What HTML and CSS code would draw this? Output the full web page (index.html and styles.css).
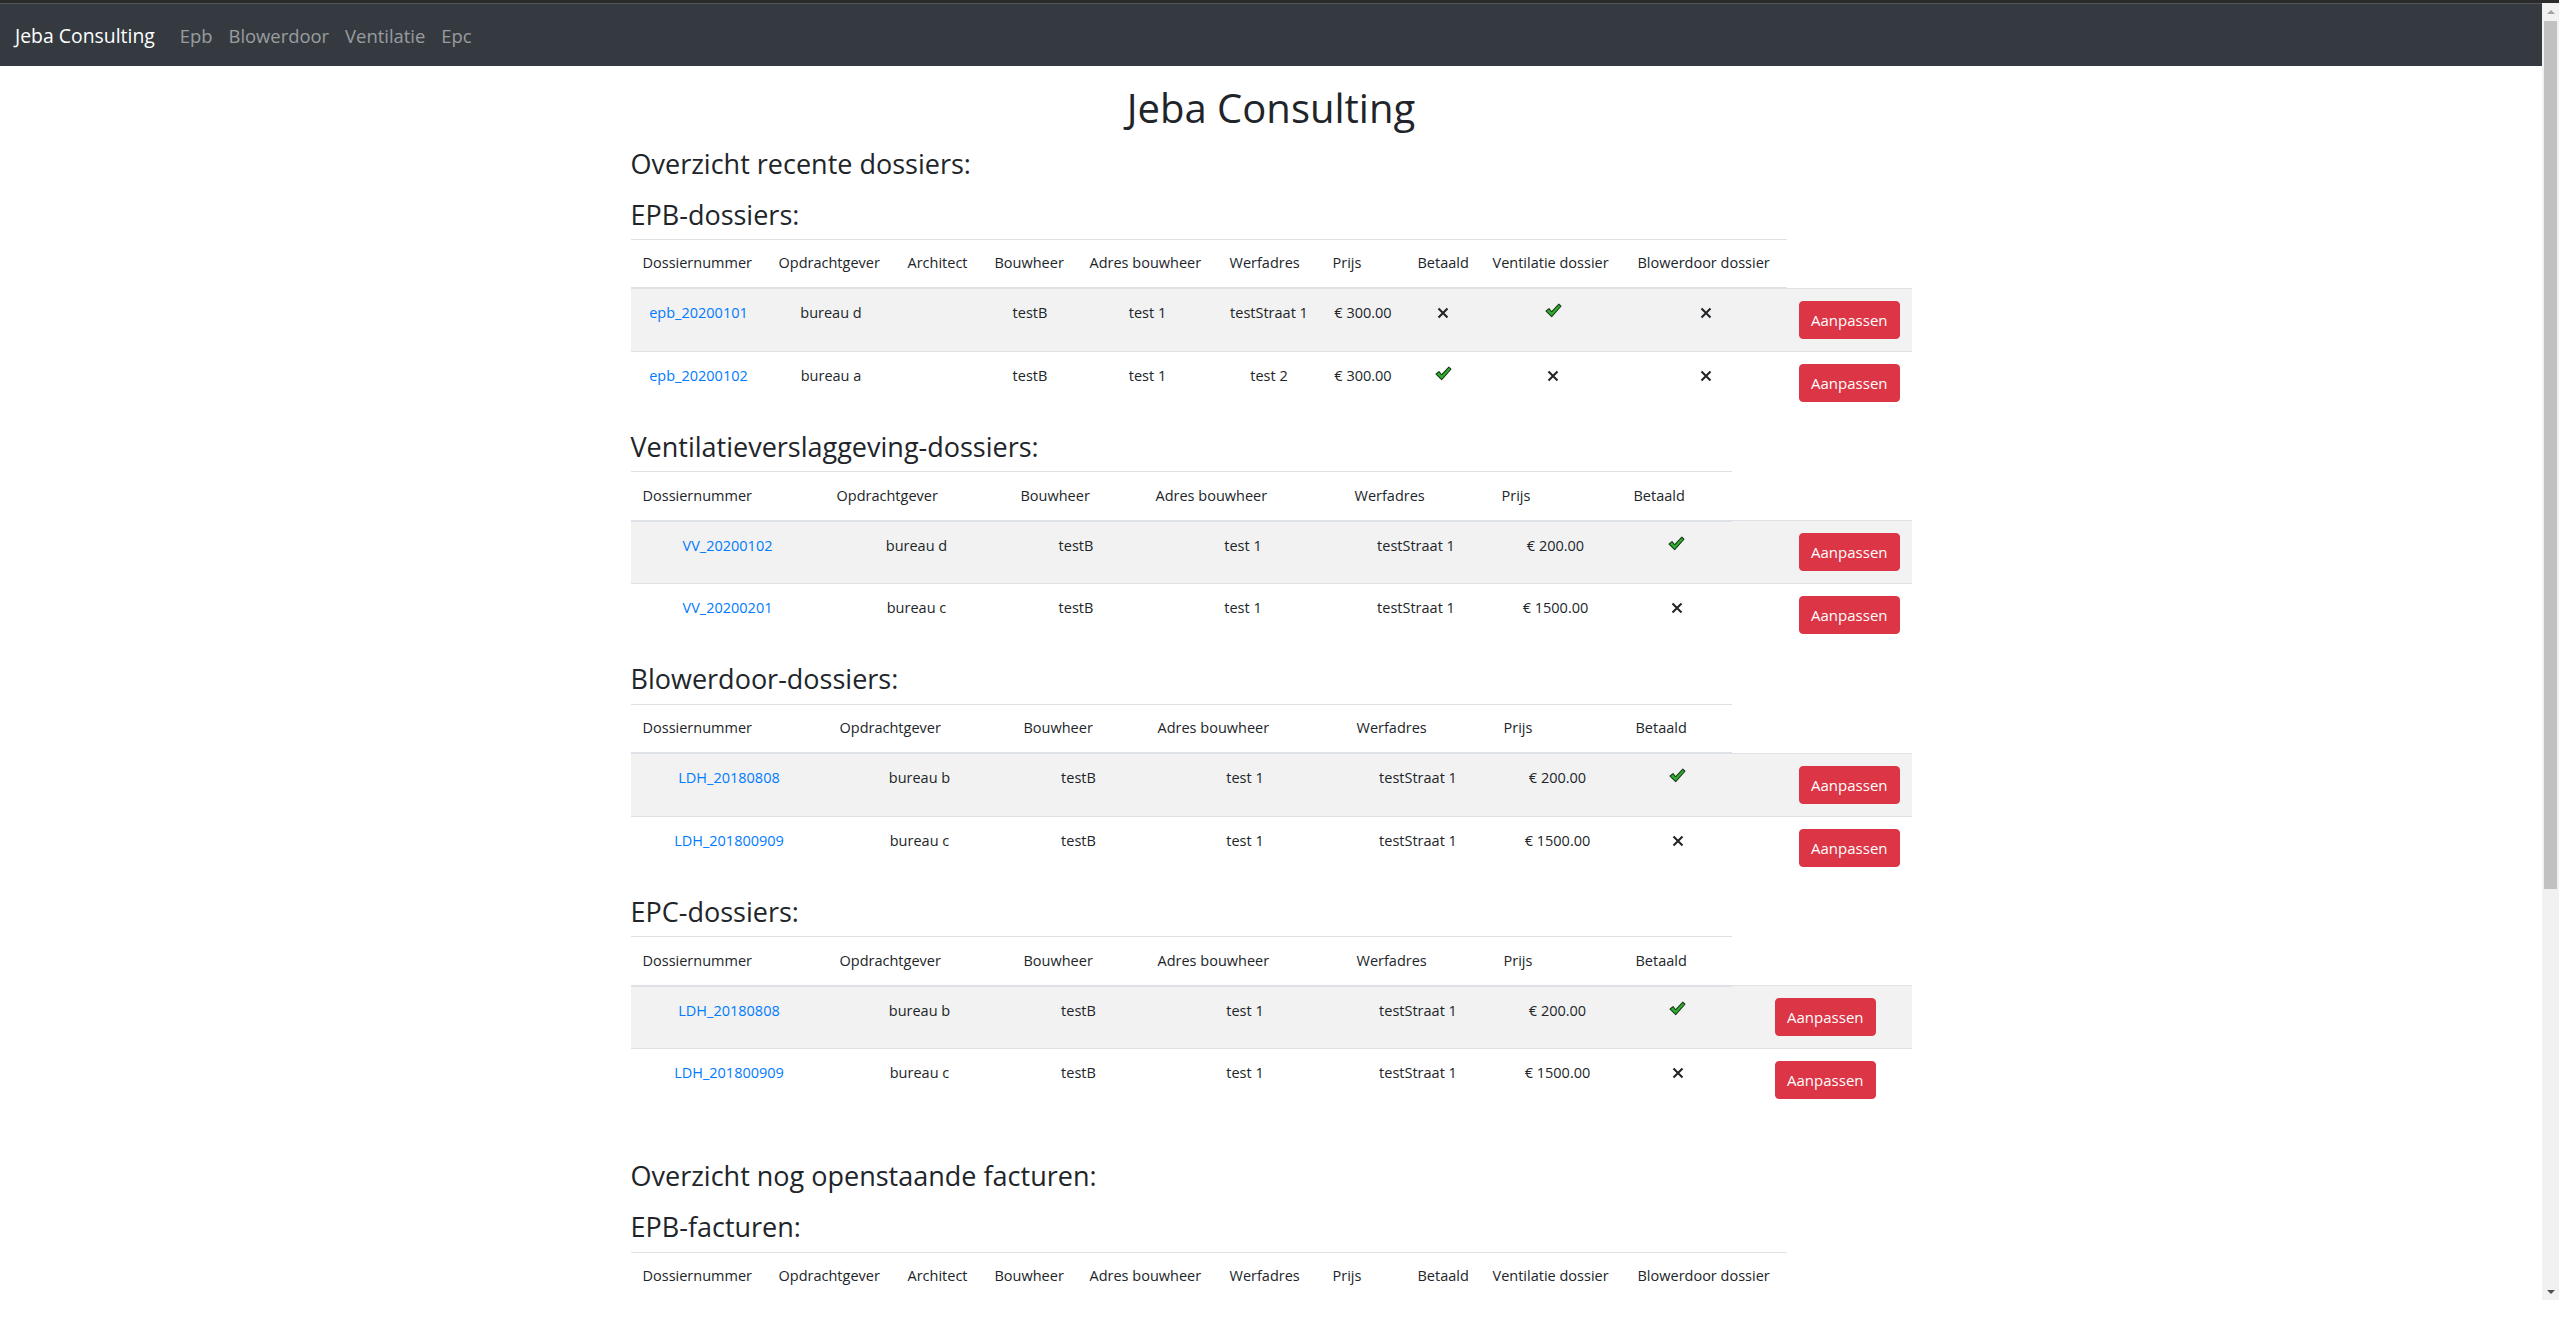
FILE: index.html
```html
<!DOCTYPE html>
<html lang="nl">
<head>
<meta charset="utf-8">
<title>Jeba Consulting</title>
<link rel="stylesheet" href="styles.css">
</head>
<body>
<div class="frame-top"></div>
<div class="viewport">
<div class="page">
<nav class="navbar">
  <a class="brand" href="#">Jeba Consulting</a>
  <a class="nav-link" href="#">Epb</a>
  <a class="nav-link" href="#">Blowerdoor</a>
  <a class="nav-link" href="#">Ventilatie</a>
  <a class="nav-link" href="#">Epc</a>
</nav>

<main class="container">
  <h1 class="page-title">Jeba Consulting</h1>

  <h3 class="overview">Overzicht recente dossiers:</h3>

  <h3 class="section">EPB-dossiers:</h3>
  <table class="tbl t-epb">
    <colgroup><col><col><col><col><col><col><col><col><col><col><col></colgroup>
    <thead><tr><th>Dossiernummer</th><th>Opdrachtgever</th><th>Architect</th><th>Bouwheer</th><th>Adres bouwheer</th><th>Werfadres</th><th>Prijs</th><th>Betaald</th><th>Ventilatie dossier</th><th>Blowerdoor dossier</th></tr></thead>
    <tbody>
      <tr><td><a href="#">epb_20200101</a></td><td>bureau d</td><td></td><td>testB</td><td>test 1</td><td>testStraat 1</td><td>€ 300.00</td>
        <td><svg class="ic-x" viewBox="0 0 12 12"><path d="M1.5 1.5L10.5 10.5M10.5 1.5L1.5 10.5"/></svg></td>
        <td><svg class="ic-ok" viewBox="0 0 16 14"><path d="M1 7.5L3.8 5.2L6.2 8.2L13 1L15 3L6.3 12.8Z"/></svg></td>
        <td><svg class="ic-x" viewBox="0 0 12 12"><path d="M1.5 1.5L10.5 10.5M10.5 1.5L1.5 10.5"/></svg></td>
        <td class="act"><button class="btn">Aanpassen</button></td></tr>
      <tr><td><a href="#">epb_20200102</a></td><td>bureau a</td><td></td><td>testB</td><td>test 1</td><td>test 2</td><td>€ 300.00</td>
        <td><svg class="ic-ok" viewBox="0 0 16 14"><path d="M1 7.5L3.8 5.2L6.2 8.2L13 1L15 3L6.3 12.8Z"/></svg></td>
        <td><svg class="ic-x" viewBox="0 0 12 12"><path d="M1.5 1.5L10.5 10.5M10.5 1.5L1.5 10.5"/></svg></td>
        <td><svg class="ic-x" viewBox="0 0 12 12"><path d="M1.5 1.5L10.5 10.5M10.5 1.5L1.5 10.5"/></svg></td>
        <td class="act"><button class="btn">Aanpassen</button></td></tr>
    </tbody>
  </table>

  <h3 class="section">Ventilatieverslaggeving-dossiers:</h3>
  <table class="tbl t-vv">
    <colgroup><col><col><col><col><col><col><col><col></colgroup>
    <thead><tr><th>Dossiernummer</th><th>Opdrachtgever</th><th>Bouwheer</th><th>Adres bouwheer</th><th>Werfadres</th><th>Prijs</th><th>Betaald</th></tr></thead>
    <tbody>
      <tr><td><a href="#">VV_20200102</a></td><td>bureau d</td><td>testB</td><td>test 1</td><td>testStraat 1</td><td>€ 200.00</td>
        <td><svg class="ic-ok" viewBox="0 0 16 14"><path d="M1 7.5L3.8 5.2L6.2 8.2L13 1L15 3L6.3 12.8Z"/></svg></td>
        <td class="act"><button class="btn">Aanpassen</button></td></tr>
      <tr><td><a href="#">VV_20200201</a></td><td>bureau c</td><td>testB</td><td>test 1</td><td>testStraat 1</td><td>€ 1500.00</td>
        <td><svg class="ic-x" viewBox="0 0 12 12"><path d="M1.5 1.5L10.5 10.5M10.5 1.5L1.5 10.5"/></svg></td>
        <td class="act"><button class="btn">Aanpassen</button></td></tr>
    </tbody>
  </table>

  <h3 class="section">Blowerdoor-dossiers:</h3>
  <table class="tbl t-bd">
    <colgroup><col><col><col><col><col><col><col><col></colgroup>
    <thead><tr><th>Dossiernummer</th><th>Opdrachtgever</th><th>Bouwheer</th><th>Adres bouwheer</th><th>Werfadres</th><th>Prijs</th><th>Betaald</th></tr></thead>
    <tbody>
      <tr><td><a href="#">LDH_20180808</a></td><td>bureau b</td><td>testB</td><td>test 1</td><td>testStraat 1</td><td>€ 200.00</td>
        <td><svg class="ic-ok" viewBox="0 0 16 14"><path d="M1 7.5L3.8 5.2L6.2 8.2L13 1L15 3L6.3 12.8Z"/></svg></td>
        <td class="act"><button class="btn">Aanpassen</button></td></tr>
      <tr><td><a href="#">LDH_201800909</a></td><td>bureau c</td><td>testB</td><td>test 1</td><td>testStraat 1</td><td>€ 1500.00</td>
        <td><svg class="ic-x" viewBox="0 0 12 12"><path d="M1.5 1.5L10.5 10.5M10.5 1.5L1.5 10.5"/></svg></td>
        <td class="act"><button class="btn">Aanpassen</button></td></tr>
    </tbody>
  </table>

  <h3 class="section">EPC-dossiers:</h3>
  <table class="tbl t-epc">
    <colgroup><col><col><col><col><col><col><col><col><col></colgroup>
    <thead><tr><th>Dossiernummer</th><th>Opdrachtgever</th><th>Bouwheer</th><th>Adres bouwheer</th><th>Werfadres</th><th>Prijs</th><th>Betaald</th></tr></thead>
    <tbody>
      <tr><td><a href="#">LDH_20180808</a></td><td>bureau b</td><td>testB</td><td>test 1</td><td>testStraat 1</td><td>€ 200.00</td>
        <td><svg class="ic-ok" viewBox="0 0 16 14"><path d="M1 7.5L3.8 5.2L6.2 8.2L13 1L15 3L6.3 12.8Z"/></svg></td>
        <td class="act"><button class="btn">Aanpassen</button></td><td></td></tr>
      <tr><td><a href="#">LDH_201800909</a></td><td>bureau c</td><td>testB</td><td>test 1</td><td>testStraat 1</td><td>€ 1500.00</td>
        <td><svg class="ic-x" viewBox="0 0 12 12"><path d="M1.5 1.5L10.5 10.5M10.5 1.5L1.5 10.5"/></svg></td>
        <td class="act"><button class="btn">Aanpassen</button></td><td></td></tr>
    </tbody>
  </table>

  <h3 class="overview overview-gap">Overzicht nog openstaande facturen:</h3>

  <h3 class="section">EPB-facturen:</h3>
  <table class="tbl t-epb">
    <colgroup><col><col><col><col><col><col><col><col><col><col><col></colgroup>
    <thead><tr><th>Dossiernummer</th><th>Opdrachtgever</th><th>Architect</th><th>Bouwheer</th><th>Adres bouwheer</th><th>Werfadres</th><th>Prijs</th><th>Betaald</th><th>Ventilatie dossier</th><th>Blowerdoor dossier</th></tr></thead>
    <tbody>
      <tr><td><a href="#">epb_20200101</a></td><td>bureau d</td><td></td><td>testB</td><td>test 1</td><td>testStraat 1</td><td>€ 300.00</td>
        <td><svg class="ic-x" viewBox="0 0 12 12"><path d="M1.5 1.5L10.5 10.5M10.5 1.5L1.5 10.5"/></svg></td>
        <td><svg class="ic-ok" viewBox="0 0 16 14"><path d="M1 7.5L3.8 5.2L6.2 8.2L13 1L15 3L6.3 12.8Z"/></svg></td>
        <td><svg class="ic-x" viewBox="0 0 12 12"><path d="M1.5 1.5L10.5 10.5M10.5 1.5L1.5 10.5"/></svg></td>
        <td class="act"><button class="btn">Aanpassen</button></td></tr>
    </tbody>
  </table>
</main>
</div>
<div class="scrollbar">
  <div class="sb-btn"><span class="tri-up"></span></div>
  <div class="sb-thumb"></div>
  <div class="sb-track"></div>
  <div class="sb-btn"><span class="tri-down"></span></div>
</div>
</div>
<div class="frame-bottom"></div>
</body>
</html>
```

FILE: styles.css
```css
* { box-sizing: border-box; }

html, body {
  margin: 0;
  padding: 0;
}

body {
  height: 1335px;
  overflow: hidden;
  display: flex;
  flex-direction: column;
  font-family: "Open Sans", "Noto Sans", "Liberation Sans", sans-serif;
  font-size: 15px;
  line-height: 1.5;
  color: #212529;
  background: #fff;
}

a { color: #007bff; text-decoration: none; }

/* window frame */
.frame-top {
  height: 3px;
  flex: none;
  background: #2b2b2b;
}

.viewport {
  height: 1297px;
  flex: none;
  display: flex;
}

.page {
  flex: 1;
  min-width: 0;
  overflow: hidden;
}

.frame-bottom {
  flex: 1;
  background: #fff;
}

.scrollbar {
  width: 17px;
  flex: none;
  display: flex;
  flex-direction: column;
  background: #f1f1f1;
}

.sb-btn {
  height: 17px;
  display: flex;
  align-items: center;
  justify-content: center;
}

.tri-up {
  width: 0;
  height: 0;
  border-left: 4px solid transparent;
  border-right: 4px solid transparent;
  border-bottom: 4px solid #a3a3a3;
}

.tri-down {
  width: 0;
  height: 0;
  border-left: 4px solid transparent;
  border-right: 4px solid transparent;
  border-top: 4px solid #505050;
}

.sb-thumb {
  height: 868px;
  margin: 1px 2px 0 2px;
  background: #c1c1c1;
}

.sb-track { flex: 1; }

/* navbar */
.navbar {
  display: flex;
  align-items: center;
  height: 63px;
  padding: 2px 15px 0 15px;
  background: #343a40;
  box-shadow: inset 0 1px 0 #50555a;
}

.brand {
  color: #fff;
  font-size: 19.4px;
  margin-right: 17px;
  white-space: nowrap;
}

.nav-link {
  color: rgba(255, 255, 255, 0.5);
  font-size: 18.4px;
  padding: 0 8px;
}

.container {
  width: 1281px;
  margin: 0 auto;
  padding-bottom: 60px;
}

h1, h3 {
  font-weight: 500;
  margin: 0;
}

.page-title {
  text-align: center;
  font-size: 40px;
  line-height: 48px;
  margin-top: 17.5px;
  margin-bottom: 16px;
}

.overview {
  font-size: 27px;
  line-height: 32.4px;
  margin-bottom: 18.6px;
}

.overview-gap {
  margin-top: 49px;
}

.section {
  font-size: 27px;
  line-height: 32.4px;
  margin-bottom: 8px;
}

.tbl {
  width: 100%;
  table-layout: fixed;
  border-collapse: collapse;
  margin-bottom: 17px;
  font-size: 14.5px;
  line-height: 22.5px;
}

.tbl th {
  text-align: left;
  font-weight: 400;
  padding: 12.5px 12px 12.5px 12px;
  border-top: 1px solid #dee2e6;
  border-bottom: 2px solid #dee2e6;
  white-space: nowrap;
  vertical-align: bottom;
}

.tbl td {
  text-align: center;
  padding: 13px 12px 11px 12px;
  border-top: 1px solid #dee2e6;
  vertical-align: top;
  white-space: nowrap;
}

.tbl tbody tr:nth-child(odd) td { background: #f2f2f2; }

.tbl td.act {
  text-align: right;
  padding: 12px 12px;
}

.btn {
  font-family: inherit;
  font-size: 15px;
  line-height: 24px;
  height: 38px;
  padding: 0 11px;
  color: #fff;
  background: #dc3545;
  border: 1px solid #dc3545;
  border-radius: 4px;
}

.ic-x {
  width: 12px;
  height: 12px;
  vertical-align: -1px;
  fill: none;
  stroke: #212529;
  stroke-width: 2.1;
}

.ic-ok {
  width: 17px;
  height: 15px;
  vertical-align: 0;
  fill: #2fae2f;
  stroke: #163a16;
  stroke-width: 1;
  stroke-linejoin: round;
}

/* EPB columns */
.t-epb col:nth-child(1) { width: 136px; }
.t-epb col:nth-child(2) { width: 129px; }
.t-epb col:nth-child(3) { width: 87px; }
.t-epb col:nth-child(4) { width: 95px; }
.t-epb col:nth-child(5) { width: 140px; }
.t-epb col:nth-child(6) { width: 103px; }
.t-epb col:nth-child(7) { width: 85px; }
.t-epb col:nth-child(8) { width: 75px; }
.t-epb col:nth-child(9) { width: 145px; }
.t-epb col:nth-child(10) { width: 161px; }
.t-epb col:nth-child(11) { width: 125px; }

/* Ventilatie columns */
.t-vv col:nth-child(1) { width: 194px; }
.t-vv col:nth-child(2) { width: 184px; }
.t-vv col:nth-child(3) { width: 135px; }
.t-vv col:nth-child(4) { width: 199px; }
.t-vv col:nth-child(5) { width: 147px; }
.t-vv col:nth-child(6) { width: 132px; }
.t-vv col:nth-child(7) { width: 110px; }
.t-vv col:nth-child(8) { width: 180px; }

/* Blowerdoor / EPC columns */
.t-bd col:nth-child(1), .t-epc col:nth-child(1) { width: 197px; }
.t-bd col:nth-child(2), .t-epc col:nth-child(2) { width: 184px; }
.t-bd col:nth-child(3), .t-epc col:nth-child(3) { width: 134px; }
.t-bd col:nth-child(4), .t-epc col:nth-child(4) { width: 199px; }
.t-bd col:nth-child(5), .t-epc col:nth-child(5) { width: 147px; }
.t-bd col:nth-child(6), .t-epc col:nth-child(6) { width: 132px; }
.t-bd col:nth-child(7), .t-epc col:nth-child(7) { width: 108px; }
.t-bd col:nth-child(8) { width: 180px; }
.t-epc col:nth-child(8) { width: 156px; }
.t-epc col:nth-child(9) { width: 24px; }
```
